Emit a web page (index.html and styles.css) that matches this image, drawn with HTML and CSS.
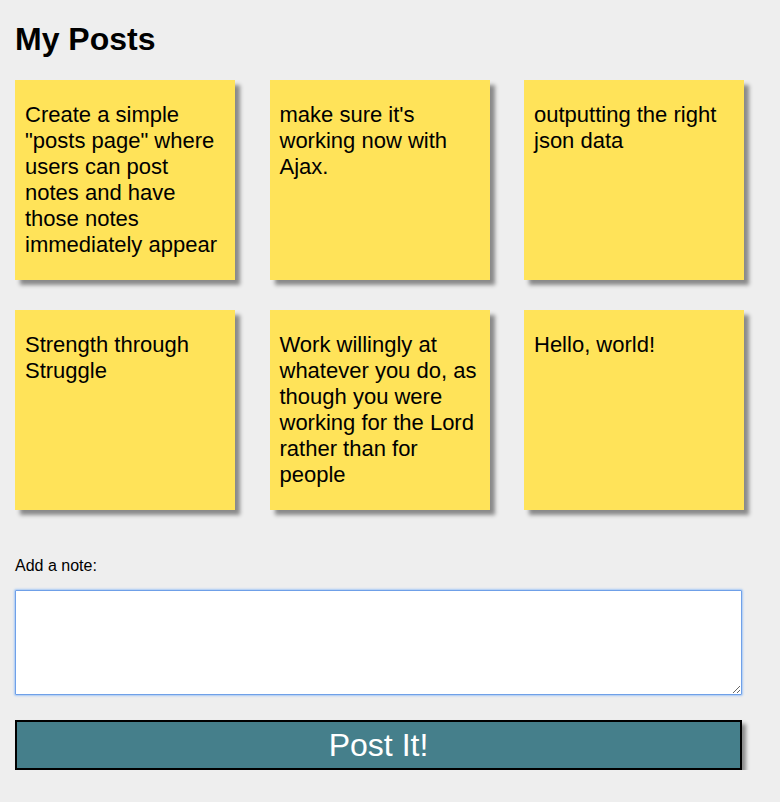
FILE: index.html
```html
<!DOCTYPE html>
<html>
<head>
<meta charset="utf-8">
<title>My Posts</title>
<link rel="stylesheet" href="styles.css">
</head>
<body>
<h1 class="title">My Posts</h1>
<div class="notes">
  <div class="note">Create a simple "posts page" where users can post notes and have those notes immediately appear</div>
  <div class="note">make sure it's working now with Ajax.</div>
  <div class="note">outputting the right json data</div>
  <div class="note">Strength through Struggle</div>
  <div class="note">Work willingly at whatever you do, as though you were working for the Lord rather than for people</div>
  <div class="note">Hello, world!</div>
</div>
<form class="add-form">
  <label class="add-label" for="note">Add a note:</label>
  <textarea class="add-input" id="note"></textarea>
  <button class="post-btn" type="button">Post It!</button>
</form>
</body>
</html>
```
FILE: styles.css
```css
html, body {
  margin: 0;
  background: #eeeeee;
  font-family: "Liberation Sans", Arial, sans-serif;
  color: #000;
}
body {
  padding: 21px 15px 0 15px;
}
.title {
  margin: 0;
  font-size: 32px;
  font-weight: bold;
  line-height: 37px;
}
.notes {
  margin-top: 22px;
  display: grid;
  grid-template-columns: 220px 220px 220px;
  column-gap: 34.5px;
  row-gap: 30px;
}
.note {
  box-sizing: border-box;
  width: 220px;
  height: 200px;
  padding: 22px 10px 10px 10px;
  background: #ffe359;
  box-shadow: 5px 5px 4px #8a8a8a;
  font-size: 22px;
  line-height: 26px;
}
.add-form {
  margin-top: 47px;
}
.add-label {
  display: block;
  font-size: 16px;
  line-height: 18px;
}
.add-input {
  display: block;
  box-sizing: border-box;
  margin: 15px 0 0 0;
  width: 727px;
  height: 105px;
  border: 1px solid #6fa0e8;
  box-shadow: 0 0 2px 1px #a6c8f5;
  border-radius: 1px;
  background: #fff;
  outline: none;
  padding: 2px;
}
.post-btn {
  display: block;
  box-sizing: border-box;
  margin-top: 25px;
  width: 727px;
  height: 50px;
  border: 2px solid #000;
  background: #457f8b;
  color: #fff;
  font-family: "Liberation Sans", Arial, sans-serif;
  font-size: 32px;
  padding: 0;
  box-shadow: 4px 4px 4px #8a8a8a;
}
```
